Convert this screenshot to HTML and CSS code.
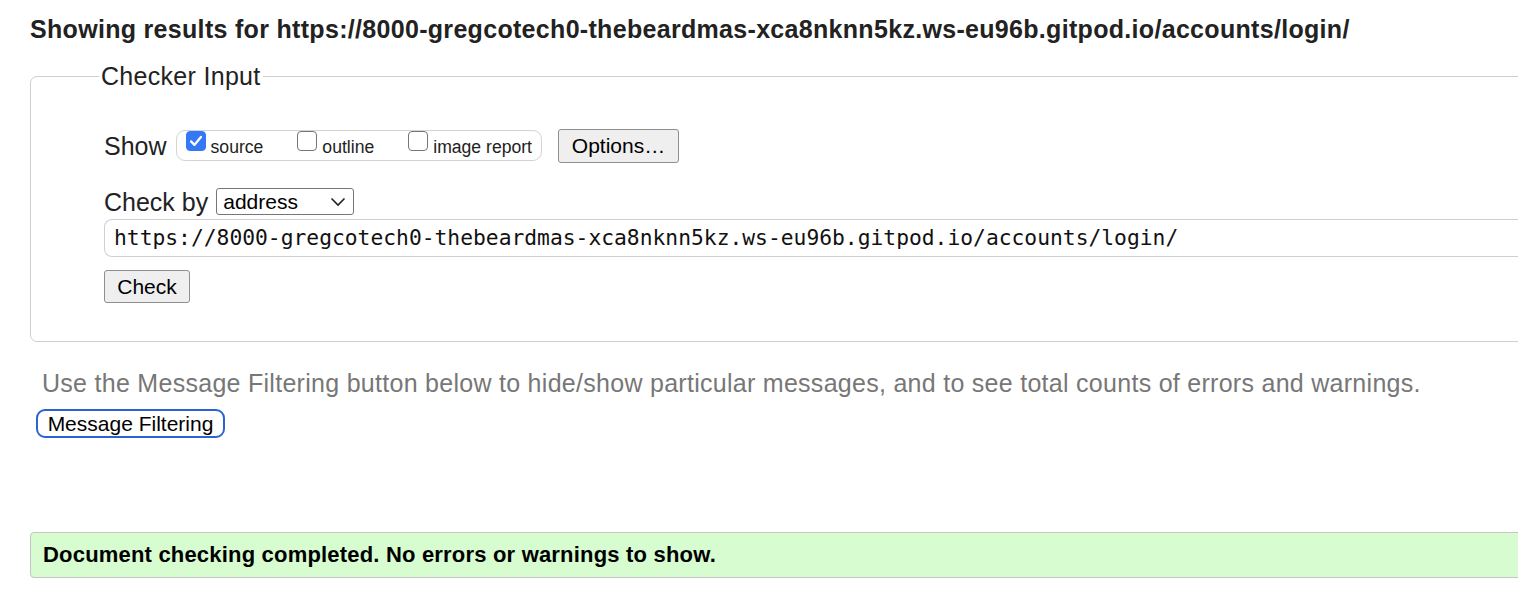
FILE: index.html
```html
<!DOCTYPE html>
<html>
<head>
<meta charset="utf-8">
<link rel="stylesheet" href="styles.css">
</head>
<body>
<div class="page">
  <h2 class="title">Showing results for https://8000-gregcotech0-thebeardmas-xca8nknn5kz.ws-eu96b.gitpod.io/accounts/login/</h2>
  <fieldset class="checker">
    <legend class="legend">Checker Input</legend>
    <div class="inner">
      <div class="row show-row">
        <span class="row-label">Show</span>
        <span class="opts">
          <span class="opt"><span class="cb checked"><svg viewBox="0 0 20 20" width="20" height="20"><path d="M4.5 10.5 L8.3 14.3 L15.5 5.5" fill="none" stroke="#fff" stroke-width="2.6" stroke-linecap="round" stroke-linejoin="round"/></svg></span><span class="opt-label">source</span></span>
          <span class="opt"><span class="cb"></span><span class="opt-label">outline</span></span>
          <span class="opt"><span class="cb"></span><span class="opt-label">image report</span></span>
        </span>
        <span class="btn options">Options…</span>
      </div>
      <div class="row by-row">
        <span class="row-label">Check by</span>
        <span class="select">address<svg class="chev" viewBox="0 0 16 10" width="16" height="10"><path d="M1.5 1.5 L8 8 L14.5 1.5" fill="none" stroke="#222" stroke-width="1.6"/></svg></span>
      </div>
      <div class="url">https://8000-gregcotech0-thebeardmas-xca8nknn5kz.ws-eu96b.gitpod.io/accounts/login/</div>
      <div class="check-row"><span class="btn check">Check</span></div>
    </div>
  </fieldset>
  <p class="hint">Use the Message Filtering button below to hide/show particular messages, and to see total counts of errors and warnings.</p>
  <div class="filter-row"><span class="filter-btn">Message Filtering</span></div>
  <div class="success">Document checking completed. No errors or warnings to show.</div>
</div>
</body>
</html>
```

FILE: styles.css
```css
html, body {
  margin: 0;
  padding: 0;
  overflow: hidden;
  background: #fff;
}
body {
  font-family: "Liberation Sans", Arial, sans-serif;
  color: #222;
}
.page {
  width: 1540px;
  padding: 15px 0 0 30px;
  display: flex;
  flex-direction: column;
}
.title {
  margin: 0;
  font-size: 25px;
  letter-spacing: 0.31px;
  line-height: 28px;
  font-weight: bold;
  color: #222;
  white-space: nowrap;
}
.checker {
  margin: 19px 0 0 0;
  border: 1px solid #cfcfcf;
  border-radius: 7px;
  padding: 38px 0 38px 68px;
  min-width: 0;
}
.legend {
  margin-left: 0;
  padding: 0 2px;
  font-size: 25px;
  letter-spacing: 0.3px;
  line-height: 29px;
  color: #222;
}
.inner {
  margin-left: 5px;
  display: flex;
  flex-direction: column;
}
.row {
  display: flex;
  align-items: center;
}
.row-label {
  font-size: 25px;
  line-height: 30px;
}
.show-row {
  height: 33px;
}
.opts {
  display: flex;
  align-items: center;
  margin-left: 9px;
  height: 29px;
  border: 1px solid #d3d3d3;
  border-radius: 9px;
  padding: 0 9px 0 9px;
}
.opt {
  display: flex;
  align-items: flex-start;
  margin-right: 34px;
}
.opt:last-child { margin-right: 0; }
.cb {
  width: 18px;
  height: 18px;
  border: 1px solid #767676;
  border-radius: 4px;
  background: #fff;
  margin-top: -4px;
  display: flex;
}
.cb.checked {
  background: #3478f6;
  border-color: #3478f6;
}
.cb svg { width: 18px; height: 18px; }
.opt-label {
  font-size: 17.6px;
  line-height: 20px;
  margin-left: 5px;
  margin-top: 2px;
}
.btn {
  display: inline-flex;
  align-items: center;
  justify-content: center;
  background: #efefef;
  border: 1px solid #8f8f8f;
  border-radius: 3px;
  font-size: 21px;
  color: #000;
  box-sizing: border-box;
}
.options {
  margin-left: 16px;
  width: 121px;
  height: 34px;
}
.by-row {
  margin-top: 26px;
  height: 27px;
}
.select {
  margin-left: 8px;
  width: 138px;
  height: 27px;
  box-sizing: border-box;
  border: 1px solid #767676;
  border-radius: 3px;
  font-size: 21px;
  color: #000;
  display: flex;
  align-items: center;
  padding-left: 6px;
}
.chev {
  margin-left: auto;
  margin-right: 7px;
}
.url {
  margin-top: 4px;
  height: 38px;
  box-sizing: border-box;
  border: 1px solid #d0d0d0;
  border-radius: 8px;
  border-right: none;
  border-top-right-radius: 0;
  border-bottom-right-radius: 0;
  font-family: "DejaVu Sans Mono", "Liberation Mono", monospace;
  font-size: 21.3px;
  line-height: 36px;
  padding-left: 9px;
  color: #111;
  white-space: nowrap;
}
.check-row {
  margin-top: 13px;
  display: flex;
}
.check {
  width: 86px;
  height: 33px;
}
.hint {
  margin: 26px 0 0 12px;
  font-size: 25px;
  letter-spacing: 0.28px;
  line-height: 30px;
  color: #777;
  white-space: nowrap;
}
.filter-row {
  margin-top: 11px;
  margin-left: 6px;
  display: flex;
}
.filter-btn {
  width: 189px;
  height: 29px;
  box-sizing: border-box;
  border: 2px solid #2b63d3;
  border-radius: 9px;
  font-size: 21px;
  color: #000;
  display: flex;
  align-items: center;
  justify-content: center;
  background: #fff;
}
.success {
  margin-top: 94px;
  height: 46px;
  box-sizing: border-box;
  border: 1px solid #c6c6c6;
  border-radius: 4px;
  background: #d6fcd0;
  font-size: 22px;
  letter-spacing: 0.19px;
  font-weight: bold;
  color: #000;
  display: flex;
  align-items: center;
  padding-left: 12px;
  white-space: nowrap;
}
```
